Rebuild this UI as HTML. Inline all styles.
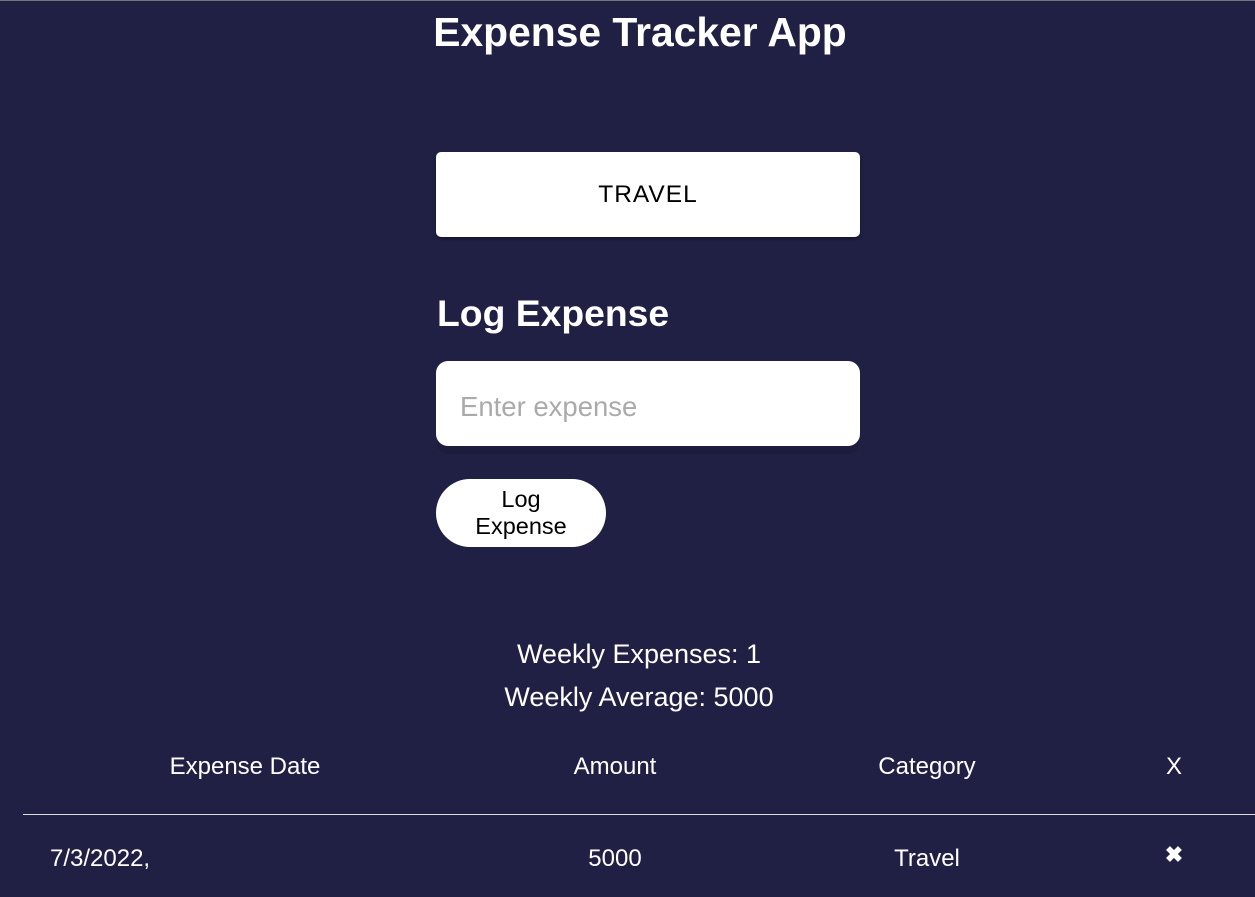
<!DOCTYPE html>
<html><head><meta charset="utf-8"><style>
html,body{margin:0;padding:0;}
body{width:1255px;height:897px;background:#202044;font-family:"Liberation Sans",Arial,sans-serif;color:#fff;position:relative;overflow:hidden;border-top:1px solid #6b7a80;box-sizing:border-box;}
.abs{position:absolute;}
h1{position:absolute;left:0;width:1280px;top:9px;margin:0;text-align:center;font-size:40.8px;font-weight:bold;line-height:44px;}
.cat{left:436px;top:151px;width:424px;height:85px;background:#fff;border-radius:5px;box-shadow:0 2px 3px rgba(0,0,0,.4);color:#000;font-size:24.5px;letter-spacing:1px;text-align:center;line-height:85px;}
h2{position:absolute;left:437px;top:291px;margin:0;font-size:37.3px;font-weight:bold;line-height:42px;}
.inp{left:436px;top:360px;width:424px;height:85px;background:#fff;border-radius:12px;color:#aaa;font-size:27.5px;line-height:92px;box-sizing:border-box;padding-left:24px;box-shadow:0 9px 0 -1px #1c1c3c;}
.btn{left:436px;top:478px;width:170px;height:68px;background:#fff;border-radius:34px;color:#000;font-size:23.5px;line-height:27px;text-align:center;display:flex;align-items:center;justify-content:center;}
.stat{left:0;width:1278px;text-align:center;font-size:27px;}
.t{font-size:24px;text-align:center;width:300px;}
.line{left:23px;top:813px;width:1232px;height:1px;background:#ddd;}
</style></head><body>
<h1>Expense Tracker App</h1>
<div class="abs cat">TRAVEL</div>
<h2>Log Expense</h2>
<div class="abs inp">Enter expense</div>
<div class="abs btn">Log<br>Expense</div>
<div class="abs stat" style="top:638px">Weekly Expenses: 1</div>
<div class="abs stat" style="top:681px">Weekly Average: 5000</div>
<div class="abs t" style="left:95px;top:752px">Expense Date</div>
<div class="abs t" style="left:465px;top:752px">Amount</div>
<div class="abs t" style="left:777px;top:752px">Category</div>
<div class="abs t" style="left:1024px;top:752px">X</div>
<div class="abs line"></div>
<div class="abs" style="left:50px;top:844px;font-size:24px">7/3/2022,</div>
<div class="abs t" style="left:465px;top:844px">5000</div>
<div class="abs t" style="left:777px;top:844px">Travel</div>
<div class="abs t" style="left:1024px;top:841px;font-weight:bold;font-size:22px">✖</div>
</body></html>
